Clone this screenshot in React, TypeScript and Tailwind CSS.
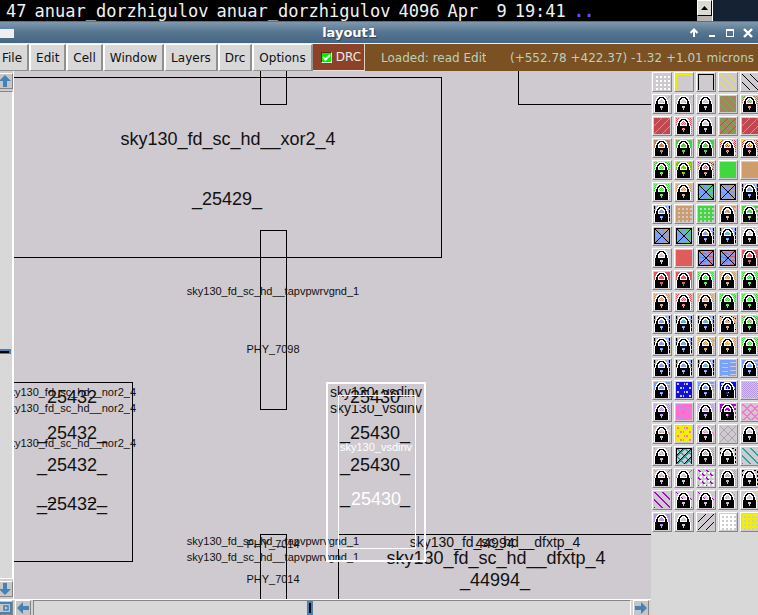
import React from "react";

/* ---------- layer swatches ---------- */

type Test = (x: number, y: number) => boolean;
type Layer = [Test, string];
type Swatch = { lock?: boolean; layers: Layer[] };

const SIZE = 16;
const fill: Test = () => true;
const stipple: Test = (x, y) => (x + y) % 2 === 0;
const sparse: Test = (x, y) => x % 2 === 0 && (y + (x >> 1) * 2) % 4 === 0;
const down: Test = (x, y) => (x - y + 32) % 8 === 0;
const downBold: Test = (x, y) => (x - y + 32) % 8 < 2;
const up: Test = (x, y) => (x + y) % 8 === 7;
const cross: Test = (x, y) => down(x, y) || up(x, y);
const crossBold: Test = (x, y) => downBold(x, y) || (x + y) % 8 < 2;
const grid: Test = (x, y) => x % 4 > 1 && y % 4 > 1;
const frame: Test = (x, y) => y === 0 || x === 0 || x === 15;
const xbox: Test = (x, y) =>
  x === 0 || y === 0 || x === 15 || y === 15 || x === y || x + y === 15;
const waves: Test = (x, y) => (y + (x >> 3)) % 4 === 3 && x % 8 > 1;
const bricks: Test = (x, y) => (x + (y >> 2) * 4) % 8 < 4 && (y % 4 === 1 || y % 4 === 2) && x % 3 > 0;
const flecks: Test = (x, y) => (x * 3 + y * 5) % 11 === 0;
const notches: Test = (x, y) => (x === 2 || x === 13) && y % 5 < 3;
const sides: Test = (x, y) => (x === 0 || x === 15) && y % 4 < 3;
const dots: Test = (x, y) => (x === 0 || x === 15 || y === 0) && (x + y) % 4 < 2;

const GREY = "#cfcacf";
const GREEN = "#3fd83f";
const TAN = "#cf9c6c";
const BROWN = "#af8060";
const RED = "#c04850";
const CORAL = "#df5c5c";
const BLUE = "#78a0ff";
const NAVY = "#1010e0";
const PURPLE = "#b898e0";
const MAGENTA = "#a808c8";
const PINK = "#ff70d0";
const YELLOW = "#f0f000";
const TEAL = "#20a8a0";
const BLACK = "#000000";
const WHITE = "#ffffff";
const ASH = "#a8a4a8";

const lock = (...layers: Layer[]): Swatch => ({ lock: true, layers });
const open = (...layers: Layer[]): Swatch => ({ layers });
const blueLock = (extra = TAN) => lock([fill, BLUE], [waves, GREY], [flecks, extra], [notches, GREY], [sides, BLACK]);
const blueBox = (extra: string) => open([fill, BLUE], [waves, extra], [flecks, extra], [xbox, BLACK]);

const SWATCHES: Swatch[] = [
  open([grid, WHITE]), open([frame, YELLOW]), open([frame, BLACK]), open([sparse, GREY], [down, "#e4e060"]), open([down, BLACK]),
  lock([up, TAN]), lock([up, TAN]), lock([up, YELLOW]), open([fill, BROWN], [down, "#60b850"]), lock([stipple, BROWN], [flecks, GREEN]),
  open([fill, RED], [up, TAN]), lock([stipple, CORAL]), lock(), open([fill, BROWN], [down, "#60b850"], [up, RED]), open([fill, RED], [up, TAN]),
  lock([fill, GREEN], [stipple, BROWN]), lock([fill, GREEN], [flecks, BROWN]), lock([fill, GREEN], [flecks, BROWN]), lock([stipple, RED], [flecks, YELLOW]), lock([stipple, RED], [flecks, YELLOW]),
  lock([stipple, GREEN], [flecks, BROWN]), lock([fill, GREEN], [sparse, YELLOW]), lock([stipple, BROWN], [flecks, MAGENTA]), open([fill, GREEN]), open([fill, TAN]),
  lock([stipple, GREEN]), lock([stipple, TAN]), blueBox(GREEN), blueBox(TAN), blueLock(),
  blueLock(), open([fill, TAN], [grid, GREY]), open([fill, GREEN], [grid, GREY]), lock([fill, TAN], [grid, GREY]), lock([fill, GREEN], [grid, GREY]),
  blueBox(TAN), blueBox(GREEN), blueLock(), blueLock(GREEN), lock([cross, WHITE]),
  lock(), open([fill, CORAL]), blueBox(CORAL), blueBox(CORAL), lock([fill, CORAL]),
  lock([fill, CORAL]), lock([fill, CORAL]), lock([stipple, GREEN]), lock([stipple, TAN]), lock([stipple, GREEN]),
  lock([stipple, TAN]), lock([stipple, CORAL]), lock([stipple, TAN]), lock([stipple, GREEN], [flecks, GREEN]), lock([stipple, GREEN]),
  blueLock(), blueLock(GREEN), blueLock(GREEN), lock([stipple, TAN], [flecks, BLACK]), lock([stipple, GREEN], [flecks, CORAL]),
  blueLock(), blueLock(GREEN), lock([stipple, TAN], [flecks, "#e0a000"]), lock([stipple, TAN], [flecks, YELLOW]), lock([stipple, GREEN]),
  blueLock(), blueLock(), blueLock(GREEN), open([fill, BLUE], [waves, GREY]), lock([fill, BLUE], [waves, GREY]),
  lock([fill, BLUE], [flecks, TAN], [waves, GREY]), open([fill, NAVY], [bricks, GREY]), lock([fill, BLUE], [waves, GREY]), lock([fill, NAVY], [bricks, GREY]), open([stipple, PURPLE]),
  lock([stipple, PURPLE]), open([fill, PINK], [flecks, BLUE]), lock([stipple, PURPLE]), lock([fill, MAGENTA], [grid, GREY]), open([crossBold, PINK]),
  lock([up, PINK], [down, TAN]), open([fill, YELLOW], [bricks, PINK]), lock([cross, PINK]), open([cross, ASH]), lock([up, TAN]),
  lock([sparse, ASH]), open([crossBold, TEAL], [up, BLACK], [frame, BLACK]), lock([stipple, ASH]), lock([dots, BLACK]), open([downBold, TEAL]),
  lock([down, TAN], [up, TEAL]), lock([up, TEAL]), open([grid, WHITE], [downBold, MAGENTA], [grid, WHITE]), lock([stipple, ASH]), lock([dots, BLACK]),
  open([downBold, MAGENTA]), lock([down, MAGENTA]), lock([down, MAGENTA]), lock([sparse, ASH]), lock([up, YELLOW]),
  lock([fill, PURPLE]), lock(), open([up, BLACK]), open([fill, WHITE], [grid, GREY]), open([fill, YELLOW], [grid, GREY]),
];

const PADLOCK = [
  "....WWWWWWW.....",
  "...WWBBBBBWW....",
  "..WWBBWWWBBWW...",
  "..WBBWW.WWBBW...",
  ".WWBWW...WWBWW..",
  ".WBBW.....WBBW..",
  ".WBBW.....WBBW..",
  ".WBBWWWWWWWBBW..",
  "WBBBBBBBBBBBBBW.",
  "WBBBBBBBBBBBBBW.",
  "WBBBBB...BBBBBW.",
  "WBBBBB...BBBBBW.",
  "WBBBBBB.BBBBBBW.",
  "WBBBBBB.BBBBBBW.",
  "WBBBBBBBBBBBBBW.",
  "WBBBBBBBBBBBBBW.",
];

function pixels(test: Test): string {
  let d = "";
  for (let y = 0; y < SIZE; y++) {
    for (let x = 0; x < SIZE; x++) {
      if (!test(x, y)) continue;
      const start = x;
      while (x + 1 < SIZE && test(x + 1, y)) x++;
      d += `M${start} ${y}h${x - start + 1}v1H${start}z`;
    }
  }
  return d;
}

const LOCK_WHITE = pixels((x, y) => PADLOCK[y][x] === "W");
const LOCK_BLACK = pixels((x, y) => PADLOCK[y][x] === "B");

function LayerButton({ swatch, index }: { swatch: Swatch; index: number }) {
  return (
    <button
      type="button"
      aria-label={`Layer ${index + 1}`}
      className="size-5 border border-t-white border-r-[#858585] border-b-[#858585] border-l-white bg-[#cfcacf] p-px"
    >
      <svg width="16" height="16" viewBox="0 0 16 16" shapeRendering="crispEdges" className="block">
        {swatch.layers.map(([test, color], i) => (
          <path key={i} d={pixels(test)} fill={color} />
        ))}
        {swatch.lock && <path d={LOCK_WHITE} fill="#fff" />}
        {swatch.lock && <path d={LOCK_BLACK} fill="#000" />}
      </svg>
    </button>
  );
}

/* ---------- window chrome ---------- */

function Terminal() {
  return (
    <div className="flex h-[21px] shrink-0 bg-black">
      <div className="flex flex-1 gap-2 overflow-hidden pl-1.5 font-['DejaVu_Sans_Mono',monospace] text-[17px] leading-[22px] whitespace-pre text-[#f2f2f2]">
        <span>47</span>
        <span>anuar_dorzhigulov</span>
        <span>anuar_dorzhigulov</span>
        <span>4096</span>
        <span>Apr</span>
        <span> 9</span>
        <span>19:41</span>
        <span className="font-bold text-[#5555ff]">..</span>
      </div>
      <div className="w-4 border-r border-white bg-[#b8b5b0]">
        <button
          type="button"
          aria-label="Scroll up"
          className="flex h-4 w-[15px] items-center justify-center border border-t-white border-r-black border-b-black border-l-white bg-[#dcdad5]"
        >
          <svg width="7" height="4" viewBox="0 0 7 4"><path d="M0 4L3.500 0L7 4z" /></svg>
        </button>
      </div>
      <div className="w-[45px] bg-[#152233]" />
    </div>
  );
}

function TitleBar() {
  return (
    <header className="flex h-[22px] shrink-0 items-center border-t border-[#5b7188] bg-linear-to-b from-[#7f98ae] via-[#55748f] to-[#466686]">
      <button type="button" aria-label="Window menu" className="h-[11px] w-3.5 border-t-2 border-[#5f86b8] bg-[#eeeeec]" />
      <h1 className="min-w-0 flex-1 pr-1 text-center text-[13px] font-bold text-white [text-shadow:1px_1px_1px_#2d4358]">
        layout1
      </h1>
      <div className="flex gap-2 pr-[5px]">
        <button type="button" aria-label="Shade">
          <svg width="10" height="10" viewBox="0 0 10 10" className="block" fill="none" stroke="#fff" strokeWidth="2"><path d="M5 9V2M1.500 5L5 1.500L8.500 5" /></svg>
        </button>
        <button type="button" aria-label="Minimize">
          <svg width="10" height="10" viewBox="0 0 10 10" className="block"><path d="M2 7h6v2H2z" fill="#fff" /></svg>
        </button>
        <button type="button" aria-label="Maximize">
          <svg width="10" height="10" viewBox="0 0 10 10" className="block"><path d="M1 1h8v8H1zM2 3v5h6V3z" fillRule="evenodd" fill="#fff" /></svg>
        </button>
        <button type="button" aria-label="Close">
          <svg width="10" height="10" viewBox="0 0 10 10" className="block"><path d="M1 1L9 9M9 1L1 9" stroke="#fff" strokeWidth="2.400" /></svg>
        </button>
      </div>
    </header>
  );
}

const MENUS = ["File", "Edit", "Cell", "Window", "Layers", "Drc", "Options"];

function MenuBar() {
  return (
    <div className="flex h-7 shrink-0 overflow-hidden border-t border-[#eeeeee] bg-[#7b5023] whitespace-nowrap">
      <nav className="-ml-[5px] flex bg-[#d8d8d8]">
        {MENUS.map((name) => (
          <button
            key={name}
            type="button"
            className="border-t border-r-2 border-b border-l-2 border-t-white border-r-[#909090] border-b-[#909090] border-l-white px-[5px] text-[#111111]"
          >
            {name}
          </button>
        ))}
      </nav>
      <label className="flex items-center gap-1 border-r border-b border-r-[#e0d0c0] border-b-[#e8e0d8] bg-[#8c4228] pr-[3px] pl-2 text-[#eaeaea]">
        <span className="grid size-[11px] *:col-start-1 *:row-start-1">
          <input
            type="checkbox"
            defaultChecked
            className="size-[11px] appearance-none border border-t-[#5a2a1a] border-r-[#e0ffe0] border-b-[#e0ffe0] border-l-[#5a2a1a] bg-[#00f000]"
          />
          <svg width="11" height="11" viewBox="0 0 11 11" className="pointer-events-none" fill="none" stroke="#fff" strokeWidth="2">
            <path d="M2 5L4.500 7.500L9 3" />
          </svg>
        </span>
        DRC
      </label>
      <p className="ml-4 w-[105px] shrink-0 overflow-hidden leading-7 text-[#b8d0bc]">Loaded: read Edit</p>
      <p className="min-w-0 flex-1 overflow-hidden pr-1 text-right leading-7 text-[#b8d0bc]">
        (+552.78 +422.37) -1.32 +1.01 microns
      </p>
    </div>
  );
}

const ARROWS = {
  up: "M7 1L13 7H9V13H5V7H1z",
  down: "M7 13L13 7H9V1H5V7H1z",
  left: "M1 7L7 1V5H13V9H7V13z",
  right: "M13 7L7 1V5H1V9H7V13z",
};

function ArrowButton({ dir }: { dir: keyof typeof ARROWS }) {
  return (
    <button
      type="button"
      aria-label={`Scroll ${dir}`}
      className="flex size-4 shrink-0 items-center justify-center border border-t-white border-r-[#858585] border-b-[#858585] border-l-white bg-[#c6c6c6]"
    >
      <svg width="14" height="14" viewBox="0 0 14 14" className="shrink-0"><path d={ARROWS[dir]} fill="#4682b4" /></svg>
    </button>
  );
}

function VerticalScroll() {
  return (
    <div className="flex w-3.5 shrink-0 flex-col items-end gap-0.5 overflow-hidden border-r border-white bg-[#d0cccf] pt-0.5">
      <ArrowButton dir="up" />
      <div className="flex w-full flex-1 flex-col border-t border-r border-b border-t-[#858585] border-r-white border-b-white bg-[#d8d8d8]">
        <div className="grow-[258]" />
        <div className="w-[11px] bg-[#4682b4] pt-0.5 pr-0.5 pb-px">
          <div className="h-0.5 bg-black" />
        </div>
        <div className="grow-[224]" />
      </div>
      <ArrowButton dir="down" />
      <div />
    </div>
  );
}

function HorizontalScroll() {
  return (
    <div className="flex h-4 shrink-0 gap-0.5 overflow-hidden border-t border-white bg-[#d4d2d4]">
      <button
        type="button"
        aria-label="Zoom to fit"
        className="flex w-[13px] items-center justify-end border border-l-0 border-t-white border-r-[#858585] border-b-[#858585] bg-[#c6c6c6]"
      >
        <svg width="12" height="12" viewBox="0 0 12 12" className="shrink-0" fill="none" stroke="#4682b4" strokeWidth="2">
          <path d="M0 1H11V11H0" /><path d="M4 4h4v4H4z" strokeWidth="1.500" />
        </svg>
      </button>
      <ArrowButton dir="left" />
      <div className="flex flex-1 border-t border-r border-l border-t-[#858585] border-r-white border-l-[#858585] bg-[#d8d8d8]">
        <div className="grow-[273]" />
        <div className="flex w-1.5 justify-center bg-[#4682b4] py-0.5">
          <div className="w-0.5 bg-black" />
        </div>
        <div className="grow-[317]" />
      </div>
      <ArrowButton dir="right" />
      <div />
    </div>
  );
}

/* ---------- chip layout drawing ---------- */

type LabelProps = { x: number; y: number; size: 11 | 14 | 18; children: string; color?: string; clip?: string; anchor?: "middle" | "end" };

const LABEL_SIZE = { 11: "text-[11px]", 14: "text-[14px]", 18: "text-[18px]" };

function Label({ x, y, size, children, color = "#111", clip, anchor = "middle" }: LabelProps) {
  return (
    <text x={x} y={y} textAnchor={anchor} fill={color} className={LABEL_SIZE[size]} clipPath={clip && `url(#${clip})`}>
      {children}
    </text>
  );
}

function Canvas() {
  return (
    <svg className="block h-full w-full font-['Liberation_Sans',Arial,sans-serif]" role="img" aria-label="Cell layout">
      <defs>
        <clipPath id="second-row"><rect x="0" y="405" width="651" height="14" /></clipPath>
        <clipPath id="underscores"><rect x="0" y="504" width="651" height="5" /></clipPath>
      </defs>
      <g transform="translate(-14 -71)">
        <g fill="none" stroke="#000" shapeRendering="crispEdges">
          <path d="M14 77.500H441.500V257.500H14" />
          <path d="M260.500 71V104.500H286.500V71" />
          <path d="M518.500 71V104.500H651" />
          <path d="M260.500 230.500H286.500V409.500H260.500z" />
          <path d="M14 382.500H132.500V561.500H14" />
          <path d="M260.500 599V534.500H286.500V599" />
          <path d="M338.500 599V534.500H651" />
          <path d="M48 502.500h8M88 502.500h8" />
        </g>

        <Label x={228} y={145} size={18}>sky130_fd_sc_hd__xor2_4</Label>
        <Label x={227} y={205} size={18}>_25429_</Label>
        <Label x={273} y={295} size={11}>sky130_fd_sc_hd__tapvpwrvgnd_1</Label>
        <Label x={273} y={353} size={11}>PHY_7098</Label>

        <Label x={136} y={396} size={11} anchor="end">sky130_fd_sc_hd__nor2_4</Label>
        <Label x={72} y={403} size={18}>25432</Label>
        <Label x={136} y={412} size={11} anchor="end">sky130_fd_sc_hd__nor2_4</Label>
        <Label x={72} y={439} size={18}>_25432_</Label>
        <Label x={136} y={447} size={11} anchor="end">sky130_fd_sc_hd__nor2_4</Label>
        <Label x={72} y={471} size={18}>_25432_</Label>
        <Label x={72} y={503} size={18} clip="underscores">_25432_</Label>
        <Label x={72} y={510} size={18}>_25432_</Label>

        <Label x={376} y={397} size={14}>sky130_vsdinv</Label>
        <Label x={375} y={403} size={18}>25430</Label>
        <Label x={376} y={413} size={14} clip="second-row">sky130_vsdinv</Label>
        <Label x={375} y={439} size={18}>_25430_</Label>
        <Label x={375} y={471} size={18}>_25430_</Label>
        <Label x={375} y={503} size={18} clip="underscores">_25430_</Label>

        <Label x={273} y={545} size={11}>sky130_fd_sc_hd__tapvpwrvgnd_1</Label>
        <Label x={273} y={548} size={11}>PHY_7014</Label>
        <Label x={273} y={561} size={11}>sky130_fd_sc_hd__tapvpwrvgnd_1</Label>
        <Label x={273} y={583} size={11}>PHY_7014</Label>
        <Label x={495} y={547} size={14}>sky130_fd_sc_hd__dfxtp_4</Label>
        <Label x={495} y={548} size={14}>44994</Label>
        <Label x={496} y={564} size={18}>sky130_fd_sc_hd__dfxtp_4</Label>
        <Label x={495} y={586} size={18}>_44994_</Label>

        <g fill="none" stroke="#fff" shapeRendering="crispEdges">
          <path d="M327 383H425V561H327z" strokeWidth="2" />
          <path d="M338.500 395.500H415.500V548.500H338.500z" />
        </g>
        <Label x={376} y={451} size={11} color="#fff">sky130_vsdinv</Label>
        <Label x={376} y={505} size={18} color="#fff">25430</Label>
      </g>
    </svg>
  );
}

export default function App() {
  return (
    <div className="flex h-screen flex-col overflow-hidden bg-[#d8d8d8] font-['DejaVu_Sans',sans-serif] text-xs">
      <Terminal />
      <TitleBar />
      <MenuBar />
      <main className="flex min-h-0 flex-1">
        <div className="flex min-w-0 flex-1 flex-col">
          <div className="flex min-h-0 flex-1">
            <VerticalScroll />
            <div className="min-w-0 flex-1 overflow-hidden bg-[#cfcacf]">
              <Canvas />
            </div>
          </div>
          <HorizontalScroll />
        </div>
        <aside aria-label="Layers" className="w-[107px] shrink-0 overflow-hidden pt-px pl-px">
          <div className="grid grid-cols-[repeat(5,20px)] gap-0.5">
            {SWATCHES.map((swatch, i) => (
              <LayerButton key={i} swatch={swatch} index={i} />
            ))}
          </div>
        </aside>
      </main>
    </div>
  );
}
